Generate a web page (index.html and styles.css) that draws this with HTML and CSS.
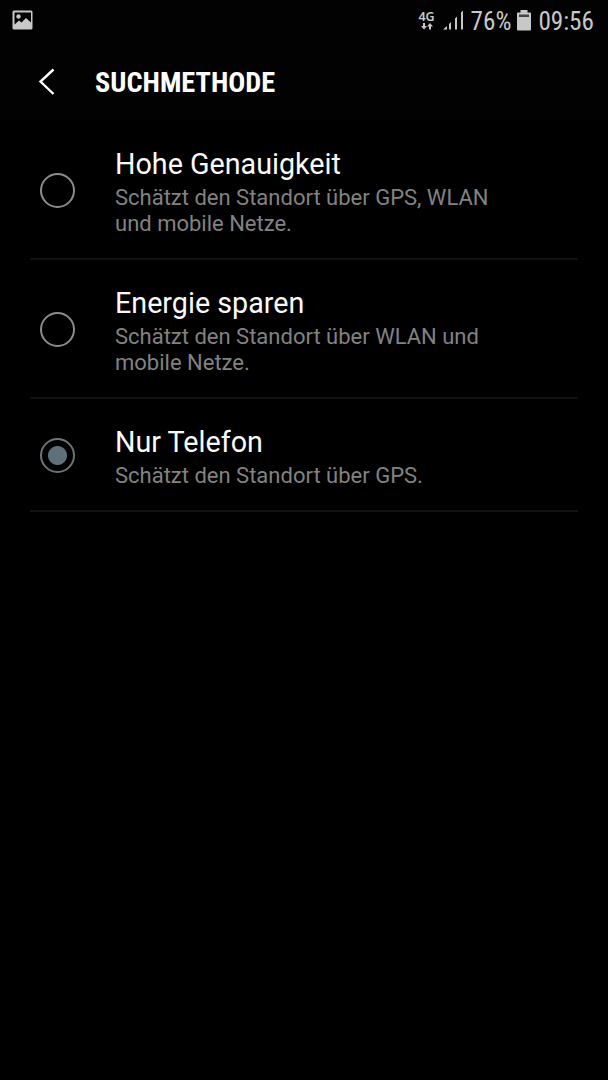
FILE: index.html
```html
<!DOCTYPE html>
<html lang="de">
<head>
    <meta charset="UTF-8">
    <meta name="viewport" content="width=device-width, initial-scale=1.0">
    <title>Suchmethode</title>
    <link rel="stylesheet" href="styles.css">
</head>
<body>
    <div class="status-bar">
        <svg class="icon-picture" width="22" height="20" viewBox="0 0 22 20">
            <path fill="#c8c8c8" fill-rule="evenodd" d="M2 .5h17q1.500 0 1.500 1.500v16q0 1.500-1.500 1.500H2Q.5 19.500.5 18V2Q.5.5 2 .5zM2.500 2.500v12l4.500-4 2.500 2 4.500-4.500 5 4.500v-10z"/>
            <circle cx="6.500" cy="6.500" r="2.200" fill="#c8c8c8"/>
        </svg>
        <div class="status-right">
            <div class="network">
                <span>4G</span>
                <svg width="12" height="7" viewBox="0 0 12 7">
                    <path fill="#c8c8c8" d="M2 0h2v3h2L3 6.500 0 3h2zM8 6.500v-3H6L9 0l3 3.500h-2v3z"/>
                </svg>
            </div>
            <svg class="signal" width="21" height="21" viewBox="0 0 21 21">
                <path fill="#c8c8c8" d="M0 20.500L4 17v3.500zM6 15l2-2v7.500H6zM12 9.500l2-2v13h-2zM18 3.500l2-2v19h-2z"/>
            </svg>
            <span class="status-text percent">76%</span>
            <svg class="battery" width="14" height="22" viewBox="0 0 14 22">
                <path fill="#c8c8c8" d="M3.500 0h7v2.500H13q1 0 1 1v16q0 1-1 1H1q-1 0-1-1v-16q0-1 1-1h2.500z"/>
                <path fill="#444" d="M2 4.500h10V7H2z"/>
            </svg>
            <span class="status-text">09:56</span>
        </div>
    </div>

    <div class="header">
        <svg class="back" width="18" height="28" viewBox="0 0 18 28">
            <path fill="none" stroke="#fff" stroke-width="2.400" d="M15.500 1.500L2.500 13.500l13 12.500"/>
        </svg>
        <h1>SUCHMETHODE</h1>
    </div>

    <div class="options">
        <div class="option">
            <span class="radio"></span>
            <div class="option-text">
                <h2>Hohe Genauigkeit</h2>
                <p>Schätzt den Standort über GPS, WLAN und mobile Netze.</p>
            </div>
        </div>
        <div class="option">
            <span class="radio"></span>
            <div class="option-text">
                <h2>Energie sparen</h2>
                <p>Schätzt den Standort über WLAN und mobile Netze.</p>
            </div>
        </div>
        <div class="option">
            <span class="radio checked"></span>
            <div class="option-text">
                <h2>Nur Telefon</h2>
                <p>Schätzt den Standort über GPS.</p>
            </div>
        </div>
    </div>
</body>
</html>
```
FILE: styles.css
```css
body {
    margin: 0;
    min-height: 1080px;
    background: #000;
    color: #fafafa;
    font-family: Roboto, sans-serif;
}
.status-bar {
    display: flex;
    justify-content: space-between;
    height: 42px;
    padding: 0 14px 0 12px;
    background: #020202;
    color: #c8c8c8;
}
.icon-picture {
    margin-top: 10px;
}
.status-right {
    display: flex;
    align-items: flex-start;
}
.network {
    display: flex;
    flex-direction: column;
    align-items: center;
    width: 18px;
    margin: 10px 7px 0 0;
    font-family: "Noto Sans", sans-serif;
    font-size: 12.5px;
    font-weight: 600;
    line-height: 13px;
}
.signal {
    margin-top: 9px;
}
.status-text {
    font-family: "Roboto Condensed", Roboto, sans-serif;
    font-stretch: 75%;
    font-size: 25.2px;
    line-height: 43px;
}
.percent {
    margin-left: 7px;
}
.battery {
    margin: 10px 7px 0 6px;
}
.header {
    display: flex;
    align-items: center;
    height: 79px;
    padding-left: 38px;
    background: #020202;
}
.header h1 {
    margin: 2px 0 0 39px;
    font-family: "Roboto Condensed", Roboto, sans-serif;
    font-stretch: 75%;
    font-size: 28.3px;
    font-weight: 700;
    line-height: 34px;
    color: #fff;
}
.options {
    padding: 0 30px;
}
.option {
    display: flex;
    align-items: center;
    padding: 26px 0 21px 10px;
    border-bottom: 2px solid #111;
}
.radio {
    box-sizing: border-box;
    flex: none;
    width: 35px;
    height: 35px;
    margin: -4px 40px 0 0;
    border: 2px solid #8c8c8c;
    border-radius: 50%;
}
.radio.checked {
    border-color: #6c7479;
    background: radial-gradient(circle, #5f707a 9px, transparent 10px);
}
.option-text {
    width: 400px;
}
.option h2 {
    margin: 0 0 4px;
    font-size: 28.7px;
    font-weight: 400;
    line-height: 34px;
}
.option p {
    margin: 0;
    color: #828282;
    font-size: 22px;
    line-height: 26px;
}
```
